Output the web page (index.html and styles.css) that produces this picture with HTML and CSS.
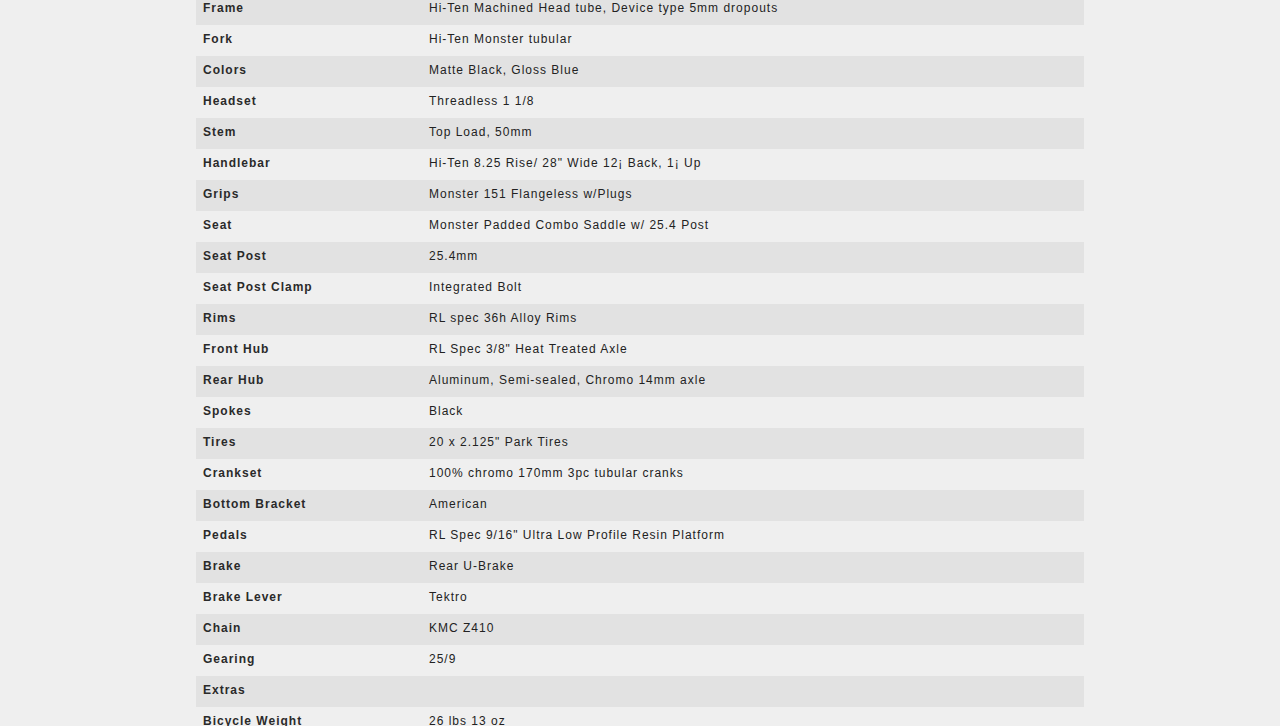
FILE: index.html
```html
<!DOCTYPE html>
<html lang="en">
<head>
    <meta charset="UTF-8">
    <meta name="viewport" content="width=device-width, initial-scale=1.0">
    <title>Specifications</title>
    <link rel="stylesheet" href="styles.css">
</head>
<body>
    <div class="specs">
        <table class="spec-table">
            <tr><th>Frame</th><td>Hi-Ten Machined Head tube, Device type 5mm dropouts</td></tr>
            <tr><th>Fork</th><td>Hi-Ten Monster tubular</td></tr>
            <tr><th>Colors</th><td>Matte Black, Gloss Blue</td></tr>
            <tr><th>Headset</th><td>Threadless 1 1/8</td></tr>
            <tr><th>Stem</th><td>Top Load, 50mm</td></tr>
            <tr><th>Handlebar</th><td>Hi-Ten 8.25 Rise/ 28" Wide 12¡ Back, 1¡ Up</td></tr>
            <tr><th>Grips</th><td>Monster 151 Flangeless w/Plugs</td></tr>
            <tr><th>Seat</th><td>Monster Padded Combo Saddle w/ 25.4 Post</td></tr>
            <tr><th>Seat Post</th><td>25.4mm</td></tr>
            <tr><th>Seat Post Clamp</th><td>Integrated Bolt</td></tr>
            <tr><th>Rims</th><td>RL spec 36h Alloy Rims</td></tr>
            <tr><th>Front Hub</th><td>RL Spec 3/8" Heat Treated Axle</td></tr>
            <tr><th>Rear Hub</th><td>Aluminum, Semi-sealed, Chromo 14mm axle</td></tr>
            <tr><th>Spokes</th><td>Black</td></tr>
            <tr><th>Tires</th><td>20 x 2.125" Park Tires</td></tr>
            <tr><th>Crankset</th><td>100% chromo 170mm 3pc tubular cranks</td></tr>
            <tr><th>Bottom Bracket</th><td>American</td></tr>
            <tr><th>Pedals</th><td>RL Spec 9/16" Ultra Low Profile Resin Platform</td></tr>
            <tr><th>Brake</th><td>Rear U-Brake</td></tr>
            <tr><th>Brake Lever</th><td>Tektro</td></tr>
            <tr><th>Chain</th><td>KMC Z410</td></tr>
            <tr><th>Gearing</th><td>25/9</td></tr>
            <tr><th>Extras</th><td></td></tr>
            <tr><th>Bicycle Weight</th><td>26 lbs 13 oz</td></tr>
        </table>
    </div>
</body>
</html>
```

FILE: styles.css
```css
body {
    margin: 0;
    background-color: #efefef;
    font-family: 'Liberation Sans', Arial, sans-serif;
    color: #333;
    overflow: hidden;
}

.specs {
    width: 888px;
    margin: -6px auto 0;
}

.spec-table {
    width: 100%;
    border-collapse: collapse;
    font-size: 12px;
    letter-spacing: 1px;
}

.spec-table tr {
    height: 31px;
}

.spec-table tr:nth-child(odd) {
    background-color: #e2e2e2;
}

.spec-table th,
.spec-table td {
    padding: 0 0 4px 7px;
    text-align: left;
    vertical-align: middle;
}

.spec-table th {
    width: 219px;
    font-weight: bold;
    color: #2a2a2a;
}

.spec-table td {
    color: #222;
}
```
